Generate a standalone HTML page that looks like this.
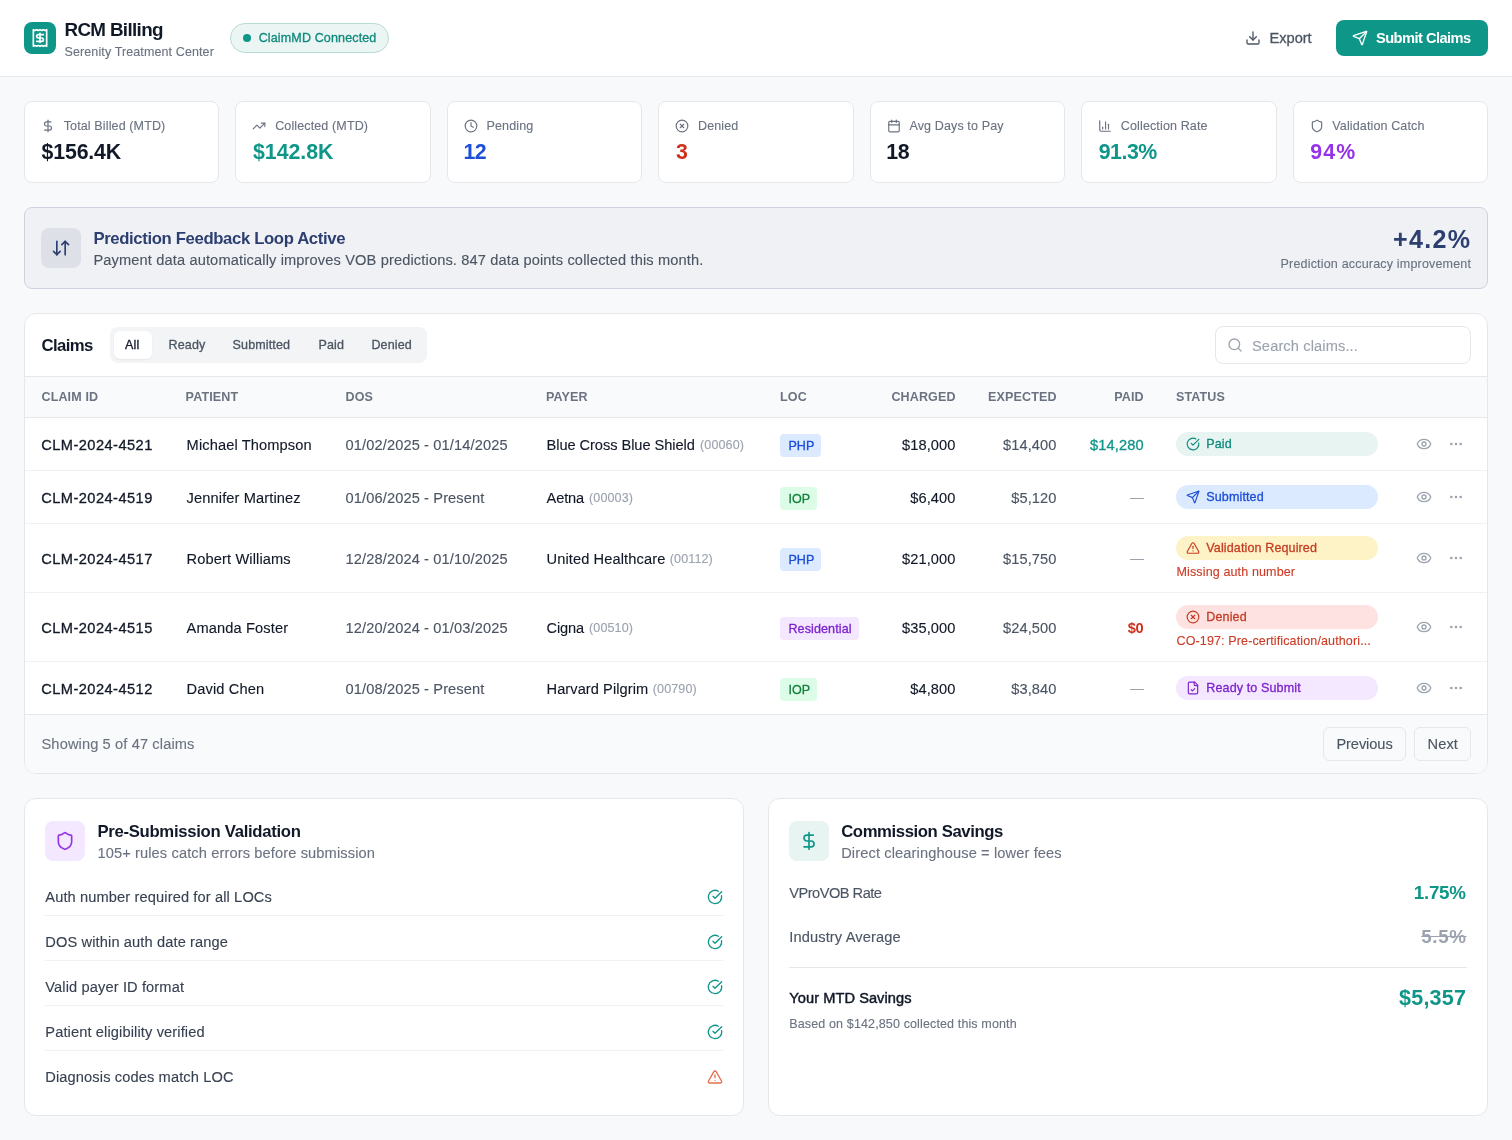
<!DOCTYPE html>
<html><head><meta charset="utf-8"><title>RCM Billing</title>
<style>
*{box-sizing:border-box;margin:0;padding:0}
html,body{width:1512px;height:1140px;overflow:hidden}
body{font-family:"Liberation Sans",sans-serif;background:#f8f9fb;position:relative}
.t{position:absolute;white-space:nowrap;line-height:1}
.b{position:absolute}
.i{position:absolute;overflow:visible}
#w{position:absolute;left:0;top:0;width:1512px;height:1140px;will-change:transform}
</style></head><body>
<div id="w">
<div class="b" style="left:0px;top:0px;width:1512px;height:76px;background:#fff;border-bottom:1px solid #e5e7eb;height:77px;"></div>
<div class="b" style="left:24px;top:22px;width:32px;height:32px;background:#0e9689;border-radius:8px;"></div>
<svg class="i" style="left:30px;top:28px;" width="20" height="20" viewBox="0 0 24 24" fill="none" stroke="#fff" stroke-width="2" stroke-linecap="round" stroke-linejoin="round"><path d="M4 2v20l2-1 2 1 2-1 2 1 2-1 2 1 2-1 2 1V2l-2 1-2-1-2 1-2-1-2 1-2-1-2 1Z"/><path d="M16 8h-6a2 2 0 1 0 0 4h4a2 2 0 1 1 0 4H8"/><path d="M12 17.5v-11"/></svg>
<div class="t" style="top:21.47px;font-size:18.81px;letter-spacing:-0.650px;color:#111827;font-weight:700;left:64.50px;">RCM Billing</div>
<div class="t" style="top:45.78px;font-size:12.54px;letter-spacing:0.100px;color:#6b7280;-webkit-text-stroke:0.12px #6b7280;left:64.50px;">Serenity Treatment Center</div>
<div class="b" style="left:230px;top:23px;width:159px;height:30px;background:#ebf5f3;border:1px solid #b7dcd5;border-radius:15px;"></div>
<div class="b" style="left:242.5px;top:34px;width:8px;height:8px;background:#0e9689;border-radius:50%;"></div>
<div class="t" style="top:31.58px;font-size:12.54px;letter-spacing:0.125px;color:#0f8a7d;-webkit-text-stroke:0.3px #0f8a7d;left:258.70px;">ClaimMD Connected</div>
<svg class="i" style="left:1245px;top:30px;" width="16" height="16" viewBox="0 0 24 24" fill="none" stroke="#4b5563" stroke-width="2" stroke-linecap="round" stroke-linejoin="round"><path d="M21 15v4a2 2 0 0 1-2 2H5a2 2 0 0 1-2-2v-4"/><polyline points="7 10 12 15 17 10"/><line x1="12" x2="12" y1="15" y2="3"/></svg>
<div class="t" style="top:31.21px;font-size:14.63px;letter-spacing:-0.040px;color:#4b5563;-webkit-text-stroke:0.3px #4b5563;left:1269.60px;">Export</div>
<div class="b" style="left:1336px;top:20px;width:152px;height:36px;background:#0e9689;border-radius:8px;"></div>
<svg class="i" style="left:1352px;top:30px;" width="16" height="16" viewBox="0 0 24 24" fill="none" stroke="#fff" stroke-width="2" stroke-linecap="round" stroke-linejoin="round"><path d="M14.536 21.686a.5.5 0 0 0 .937-.024l6.5-19a.496.496 0 0 0-.635-.635l-19 6.5a.5.5 0 0 0-.024.937l7.93 3.18a2 2 0 0 1 1.112 1.11z"/><path d="m21.854 2.147-10.94 10.939"/></svg>
<div class="t" style="top:31.21px;font-size:14.63px;letter-spacing:-0.533px;color:#fff;font-weight:700;left:1376.00px;">Submit Claims</div>
<div class="b" style="left:24.0px;top:101px;width:195.43px;height:82px;background:#fff;border:1px solid #e5e7eb;border-radius:8px;"></div>
<svg class="i" style="left:41.0px;top:118.5px;" width="14" height="14" viewBox="0 0 24 24" fill="none" stroke="#6b7280" stroke-width="2" stroke-linecap="round" stroke-linejoin="round"><line x1="12" x2="12" y1="2" y2="22"/><path d="M17 5H9.5a3.5 3.5 0 0 0 0 7h5a3.5 3.5 0 0 1 0 7H6"/></svg>
<div class="t" style="top:120.28px;font-size:12.54px;letter-spacing:0.120px;color:#6b7280;-webkit-text-stroke:0.12px #6b7280;left:63.70px;">Total Billed (MTD)</div>
<div class="t" style="top:141.75px;font-size:21.32px;letter-spacing:-0.167px;color:#111827;font-weight:700;left:41.60px;">$156.4K</div>
<div class="b" style="left:235.43px;top:101px;width:195.43px;height:82px;background:#fff;border:1px solid #e5e7eb;border-radius:8px;"></div>
<svg class="i" style="left:252.43px;top:118.5px;" width="14" height="14" viewBox="0 0 24 24" fill="none" stroke="#6b7280" stroke-width="2" stroke-linecap="round" stroke-linejoin="round"><polyline points="22 7 13.5 15.5 8.5 10.5 2 17"/><polyline points="16 7 22 7 22 13"/></svg>
<div class="t" style="top:120.28px;font-size:12.54px;letter-spacing:0.120px;color:#6b7280;-webkit-text-stroke:0.12px #6b7280;left:275.13px;">Collected (MTD)</div>
<div class="t" style="top:141.75px;font-size:21.32px;letter-spacing:-0.017px;color:#0e9689;font-weight:700;left:253.03px;">$142.8K</div>
<div class="b" style="left:446.86px;top:101px;width:195.43px;height:82px;background:#fff;border:1px solid #e5e7eb;border-radius:8px;"></div>
<svg class="i" style="left:463.86px;top:118.5px;" width="14" height="14" viewBox="0 0 24 24" fill="none" stroke="#6b7280" stroke-width="2" stroke-linecap="round" stroke-linejoin="round"><circle cx="12" cy="12" r="10"/><polyline points="12 6 12 12 16 14"/></svg>
<div class="t" style="top:120.28px;font-size:12.54px;letter-spacing:0.120px;color:#6b7280;-webkit-text-stroke:0.12px #6b7280;left:486.56px;">Pending</div>
<div class="t" style="top:141.75px;font-size:21.32px;letter-spacing:-0.500px;color:#1d4ed8;font-weight:700;left:463.46px;">12</div>
<div class="b" style="left:658.29px;top:101px;width:195.43px;height:82px;background:#fff;border:1px solid #e5e7eb;border-radius:8px;"></div>
<svg class="i" style="left:675.29px;top:118.5px;" width="14" height="14" viewBox="0 0 24 24" fill="none" stroke="#6b7280" stroke-width="2" stroke-linecap="round" stroke-linejoin="round"><circle cx="12" cy="12" r="10"/><path d="m15 9-6 6"/><path d="m9 9 6 6"/></svg>
<div class="t" style="top:120.28px;font-size:12.54px;letter-spacing:0.120px;color:#6b7280;-webkit-text-stroke:0.12px #6b7280;left:697.99px;">Denied</div>
<div class="t" style="top:141.75px;font-size:21.32px;letter-spacing:-0.500px;color:#cf301b;font-weight:700;left:675.89px;">3</div>
<div class="b" style="left:869.71px;top:101px;width:195.43px;height:82px;background:#fff;border:1px solid #e5e7eb;border-radius:8px;"></div>
<svg class="i" style="left:886.71px;top:118.5px;" width="14" height="14" viewBox="0 0 24 24" fill="none" stroke="#6b7280" stroke-width="2" stroke-linecap="round" stroke-linejoin="round"><path d="M8 2v4"/><path d="M16 2v4"/><rect width="18" height="18" x="3" y="4" rx="2"/><path d="M3 10h18"/></svg>
<div class="t" style="top:120.28px;font-size:12.54px;letter-spacing:0.120px;color:#6b7280;-webkit-text-stroke:0.12px #6b7280;left:909.41px;">Avg Days to Pay</div>
<div class="t" style="top:141.75px;font-size:21.32px;letter-spacing:-0.500px;color:#111827;font-weight:700;left:886.31px;">18</div>
<div class="b" style="left:1081.14px;top:101px;width:195.43px;height:82px;background:#fff;border:1px solid #e5e7eb;border-radius:8px;"></div>
<svg class="i" style="left:1098.14px;top:118.5px;" width="14" height="14" viewBox="0 0 24 24" fill="none" stroke="#6b7280" stroke-width="2" stroke-linecap="round" stroke-linejoin="round"><path d="M3 3v16a2 2 0 0 0 2 2h16"/><path d="M18 17V9"/><path d="M13 17V5"/><path d="M8 17v-3"/></svg>
<div class="t" style="top:120.28px;font-size:12.54px;letter-spacing:0.120px;color:#6b7280;-webkit-text-stroke:0.12px #6b7280;left:1120.84px;">Collection Rate</div>
<div class="t" style="top:141.75px;font-size:21.32px;letter-spacing:-0.475px;color:#0e9689;font-weight:700;left:1098.74px;">91.3%</div>
<div class="b" style="left:1292.57px;top:101px;width:195.43px;height:82px;background:#fff;border:1px solid #e5e7eb;border-radius:8px;"></div>
<svg class="i" style="left:1309.57px;top:118.5px;" width="14" height="14" viewBox="0 0 24 24" fill="none" stroke="#6b7280" stroke-width="2" stroke-linecap="round" stroke-linejoin="round"><path d="M20 13c0 5-3.5 7.5-7.66 8.95a1 1 0 0 1-.67-.01C7.5 20.5 4 18 4 13V6a1 1 0 0 1 1-1c2 0 4.5-1.2 6.24-2.72a1.17 1.17 0 0 1 1.52 0C14.51 3.81 17 5 19 5a1 1 0 0 1 1 1z"/></svg>
<div class="t" style="top:120.28px;font-size:12.54px;letter-spacing:0.120px;color:#6b7280;-webkit-text-stroke:0.12px #6b7280;left:1332.27px;">Validation Catch</div>
<div class="t" style="top:141.75px;font-size:21.32px;letter-spacing:1.200px;color:#9333ea;font-weight:700;left:1310.17px;">94%</div>
<div class="b" style="left:24px;top:207px;width:1464px;height:82px;background:#eff1f5;border:1px solid #cdd2dc;border-radius:8px;"></div>
<div class="b" style="left:41px;top:228px;width:40px;height:40px;background:#dde1e7;border-radius:8px;"></div>
<svg class="i" style="left:51px;top:238px;" width="20" height="20" viewBox="0 0 24 24" fill="none" stroke="#2d3f70" stroke-width="2" stroke-linecap="round" stroke-linejoin="round"><path d="m3 16 4 4 4-4"/><path d="M7 20V4"/><path d="m21 8-4-4-4 4"/><path d="M17 4v16"/></svg>
<div class="t" style="top:231.44px;font-size:16.72px;letter-spacing:-0.363px;color:#2d3f70;font-weight:700;left:93.40px;">Prediction Feedback Loop Active</div>
<div class="t" style="top:252.91px;font-size:14.63px;letter-spacing:0.131px;color:#4b5563;-webkit-text-stroke:0.12px #4b5563;left:93.40px;">Payment data automatically improves VOB predictions. 847 data points collected this month.</div>
<div class="t" style="top:227.36px;font-size:25.08px;letter-spacing:1.275px;color:#2d3f70;font-weight:700;right:40.76px;text-align:right;">+4.2%</div>
<div class="t" style="top:257.98px;font-size:12.54px;letter-spacing:0.173px;color:#6b7280;-webkit-text-stroke:0.12px #6b7280;right:40.83px;text-align:right;">Prediction accuracy improvement</div>
<div class="b" style="left:24px;top:313px;width:1464px;height:461px;background:#fff;border:1px solid #e5e7eb;border-radius:12px;overflow:hidden;"></div>
<div class="t" style="top:337.94px;font-size:16.72px;letter-spacing:-0.620px;color:#111827;font-weight:700;left:41.50px;">Claims</div>
<div class="b" style="left:110px;top:327px;width:317px;height:36px;background:#f3f4f6;border-radius:8px;"></div>
<div class="b" style="left:114px;top:331px;width:37.5px;height:28px;background:#fff;border-radius:6px;box-shadow:0 1px 2px rgba(0,0,0,.06);"></div>
<div class="t" style="top:339.28px;font-size:12.54px;letter-spacing:0.120px;color:#111827;-webkit-text-stroke:0.3px #111827;left:125.00px;">All</div>
<div class="t" style="top:339.28px;font-size:12.54px;letter-spacing:0.120px;color:#4b5563;-webkit-text-stroke:0.3px #4b5563;left:168.60px;">Ready</div>
<div class="t" style="top:339.28px;font-size:12.54px;letter-spacing:0.120px;color:#4b5563;-webkit-text-stroke:0.3px #4b5563;left:232.60px;">Submitted</div>
<div class="t" style="top:339.28px;font-size:12.54px;letter-spacing:0.120px;color:#4b5563;-webkit-text-stroke:0.3px #4b5563;left:318.50px;">Paid</div>
<div class="t" style="top:339.28px;font-size:12.54px;letter-spacing:0.120px;color:#4b5563;-webkit-text-stroke:0.3px #4b5563;left:371.40px;">Denied</div>
<div class="b" style="left:1215px;top:326px;width:256px;height:38px;background:#fff;border:1px solid #e5e7eb;border-radius:8px;"></div>
<svg class="i" style="left:1227px;top:337px;" width="16" height="16" viewBox="0 0 24 24" fill="none" stroke="#9ca3af" stroke-width="2" stroke-linecap="round" stroke-linejoin="round"><circle cx="11" cy="11" r="8"/><path d="m21 21-4.3-4.3"/></svg>
<div class="t" style="top:339.21px;font-size:14.63px;letter-spacing:0.120px;color:#9ca3af;-webkit-text-stroke:0.12px #9ca3af;left:1252.00px;">Search claims...</div>
<div class="b" style="left:25px;top:376px;width:1462px;height:1px;background:#e5e7eb;"></div>
<div class="b" style="left:25px;top:377px;width:1462px;height:40px;background:#f9fafb;"></div>
<div class="b" style="left:25px;top:417px;width:1462px;height:1px;background:#e5e7eb;"></div>
<div class="t" style="top:391.18px;font-size:12.54px;letter-spacing:0.120px;color:#6b7280;font-weight:700;left:41.50px;">CLAIM ID</div>
<div class="t" style="top:391.18px;font-size:12.54px;letter-spacing:0.120px;color:#6b7280;font-weight:700;left:185.60px;">PATIENT</div>
<div class="t" style="top:391.18px;font-size:12.54px;letter-spacing:0.120px;color:#6b7280;font-weight:700;left:345.50px;">DOS</div>
<div class="t" style="top:391.18px;font-size:12.54px;letter-spacing:0.120px;color:#6b7280;font-weight:700;left:546.00px;">PAYER</div>
<div class="t" style="top:391.18px;font-size:12.54px;letter-spacing:0.120px;color:#6b7280;font-weight:700;left:780.00px;">LOC</div>
<div class="t" style="top:391.18px;font-size:12.54px;letter-spacing:0.120px;color:#6b7280;font-weight:700;right:556.39px;text-align:right;">CHARGED</div>
<div class="t" style="top:391.18px;font-size:12.54px;letter-spacing:0.120px;color:#6b7280;font-weight:700;right:455.40px;text-align:right;">EXPECTED</div>
<div class="t" style="top:391.18px;font-size:12.54px;letter-spacing:0.120px;color:#6b7280;font-weight:700;right:368.24px;text-align:right;">PAID</div>
<div class="t" style="top:391.18px;font-size:12.54px;letter-spacing:0.120px;color:#6b7280;font-weight:700;left:1176.00px;">STATUS</div>
<div class="t" style="top:437.51px;font-size:14.63px;letter-spacing:0.450px;color:#111827;-webkit-text-stroke:0.3px #111827;left:41.20px;">CLM-2024-4521</div>
<div class="t" style="top:437.51px;font-size:14.63px;letter-spacing:0.120px;color:#111827;-webkit-text-stroke:0.12px #111827;left:186.60px;">Michael Thompson</div>
<div class="t" style="top:437.51px;font-size:14.63px;letter-spacing:0.120px;color:#4b5563;-webkit-text-stroke:0.12px #4b5563;left:345.50px;">01/02/2025 - 01/14/2025</div>
<div class="t" style="top:437.51px;font-size:14.63px;letter-spacing:-0.057px;color:#111827;-webkit-text-stroke:0.12px #111827;left:546.50px;">Blue Cross Blue Shield</div>
<div class="t" style="top:439.28px;font-size:12.54px;letter-spacing:0.120px;color:#9ca3af;-webkit-text-stroke:0.12px #9ca3af;left:700.00px;">(00060)</div>
<div class="b" style="left:780px;top:433.5px;width:40.5px;height:23px;background:#dbeafe;border-radius:4px;"></div>
<div class="t" style="top:439.88px;font-size:12.54px;letter-spacing:0.120px;color:#1d4ed8;-webkit-text-stroke:0.3px #1d4ed8;left:788.40px;">PHP</div>
<div class="t" style="top:437.51px;font-size:14.63px;letter-spacing:0.120px;color:#111827;-webkit-text-stroke:0.12px #111827;right:556.40px;text-align:right;">$18,000</div>
<div class="t" style="top:437.51px;font-size:14.63px;letter-spacing:0.120px;color:#4b5563;-webkit-text-stroke:0.12px #4b5563;right:455.40px;text-align:right;">$14,400</div>
<div class="t" style="top:437.51px;font-size:14.63px;letter-spacing:0.120px;color:#0e9689;-webkit-text-stroke:0.3px #0e9689;right:368.30px;text-align:right;">$14,280</div>
<div class="b" style="left:1176px;top:432.0px;width:202px;height:24px;background:#e7f4f1;border-radius:12px;"></div>
<svg class="i" style="left:1186px;top:437.0px;" width="14" height="14" viewBox="0 0 24 24" fill="none" stroke="#0f8a7d" stroke-width="2" stroke-linecap="round" stroke-linejoin="round"><path d="M21.801 10A10 10 0 1 1 17 3.335"/><path d="m9 11 3 3L22 4"/></svg>
<div class="t" style="top:438.28px;font-size:12.54px;letter-spacing:0.120px;color:#0f8a7d;-webkit-text-stroke:0.3px #0f8a7d;left:1206.30px;">Paid</div>
<svg class="i" style="left:1416px;top:436.0px;" width="16" height="16" viewBox="0 0 24 24" fill="none" stroke="#9ca3af" stroke-width="2" stroke-linecap="round" stroke-linejoin="round"><path d="M2.062 12.348a1 1 0 0 1 0-.696 10.75 10.75 0 0 1 19.876 0 1 1 0 0 1 0 .696 10.75 10.75 0 0 1-19.876 0"/><circle cx="12" cy="12" r="3"/></svg>
<svg class="i" style="left:1448px;top:436.0px;" width="16" height="16" viewBox="0 0 24 24" fill="none" stroke="#9ca3af" stroke-width="2" stroke-linecap="round" stroke-linejoin="round"><circle cx="12" cy="12" r="1"/><circle cx="19" cy="12" r="1"/><circle cx="5" cy="12" r="1"/></svg>
<div class="b" style="left:25px;top:470px;width:1462px;height:1px;background:#f0f1f3;"></div>
<div class="t" style="top:490.51px;font-size:14.63px;letter-spacing:0.450px;color:#111827;-webkit-text-stroke:0.3px #111827;left:41.20px;">CLM-2024-4519</div>
<div class="t" style="top:490.51px;font-size:14.63px;letter-spacing:0.120px;color:#111827;-webkit-text-stroke:0.12px #111827;left:186.60px;">Jennifer Martinez</div>
<div class="t" style="top:490.51px;font-size:14.63px;letter-spacing:0.120px;color:#4b5563;-webkit-text-stroke:0.12px #4b5563;left:345.50px;">01/06/2025 - Present</div>
<div class="t" style="top:490.51px;font-size:14.63px;letter-spacing:-0.125px;color:#111827;-webkit-text-stroke:0.12px #111827;left:546.50px;">Aetna</div>
<div class="t" style="top:492.28px;font-size:12.54px;letter-spacing:0.120px;color:#9ca3af;-webkit-text-stroke:0.12px #9ca3af;left:589.00px;">(00003)</div>
<div class="b" style="left:780px;top:486.5px;width:37px;height:23px;background:#dcfce7;border-radius:4px;"></div>
<div class="t" style="top:492.88px;font-size:12.54px;letter-spacing:0.120px;color:#15803d;-webkit-text-stroke:0.3px #15803d;left:788.40px;">IOP</div>
<div class="t" style="top:490.51px;font-size:14.63px;letter-spacing:0.120px;color:#111827;-webkit-text-stroke:0.12px #111827;right:556.42px;text-align:right;">$6,400</div>
<div class="t" style="top:490.51px;font-size:14.63px;letter-spacing:0.120px;color:#4b5563;-webkit-text-stroke:0.12px #4b5563;right:455.42px;text-align:right;">$5,120</div>
<div class="b" style="left:1129.5px;top:498px;width:14px;height:1.2px;background:#9ca3af;"></div>
<div class="b" style="left:1176px;top:485.0px;width:202px;height:24px;background:#dbeafe;border-radius:12px;"></div>
<svg class="i" style="left:1186px;top:490.0px;" width="14" height="14" viewBox="0 0 24 24" fill="none" stroke="#1d4ed8" stroke-width="2" stroke-linecap="round" stroke-linejoin="round"><path d="M14.536 21.686a.5.5 0 0 0 .937-.024l6.5-19a.496.496 0 0 0-.635-.635l-19 6.5a.5.5 0 0 0-.024.937l7.93 3.18a2 2 0 0 1 1.112 1.11z"/><path d="m21.854 2.147-10.94 10.939"/></svg>
<div class="t" style="top:491.28px;font-size:12.54px;letter-spacing:0.120px;color:#1d4ed8;-webkit-text-stroke:0.3px #1d4ed8;left:1206.30px;">Submitted</div>
<svg class="i" style="left:1416px;top:489.0px;" width="16" height="16" viewBox="0 0 24 24" fill="none" stroke="#9ca3af" stroke-width="2" stroke-linecap="round" stroke-linejoin="round"><path d="M2.062 12.348a1 1 0 0 1 0-.696 10.75 10.75 0 0 1 19.876 0 1 1 0 0 1 0 .696 10.75 10.75 0 0 1-19.876 0"/><circle cx="12" cy="12" r="3"/></svg>
<svg class="i" style="left:1448px;top:489.0px;" width="16" height="16" viewBox="0 0 24 24" fill="none" stroke="#9ca3af" stroke-width="2" stroke-linecap="round" stroke-linejoin="round"><circle cx="12" cy="12" r="1"/><circle cx="19" cy="12" r="1"/><circle cx="5" cy="12" r="1"/></svg>
<div class="b" style="left:25px;top:523px;width:1462px;height:1px;background:#f0f1f3;"></div>
<div class="t" style="top:551.51px;font-size:14.63px;letter-spacing:0.450px;color:#111827;-webkit-text-stroke:0.3px #111827;left:41.20px;">CLM-2024-4517</div>
<div class="t" style="top:551.51px;font-size:14.63px;letter-spacing:0.120px;color:#111827;-webkit-text-stroke:0.12px #111827;left:186.60px;">Robert Williams</div>
<div class="t" style="top:551.51px;font-size:14.63px;letter-spacing:0.120px;color:#4b5563;-webkit-text-stroke:0.12px #4b5563;left:345.50px;">12/28/2024 - 01/10/2025</div>
<div class="t" style="top:551.51px;font-size:14.63px;letter-spacing:0.106px;color:#111827;-webkit-text-stroke:0.12px #111827;left:546.50px;">United Healthcare</div>
<div class="t" style="top:553.28px;font-size:12.54px;letter-spacing:0.120px;color:#9ca3af;-webkit-text-stroke:0.12px #9ca3af;left:669.80px;">(00112)</div>
<div class="b" style="left:780px;top:547.5px;width:40.5px;height:23px;background:#dbeafe;border-radius:4px;"></div>
<div class="t" style="top:553.88px;font-size:12.54px;letter-spacing:0.120px;color:#1d4ed8;-webkit-text-stroke:0.3px #1d4ed8;left:788.40px;">PHP</div>
<div class="t" style="top:551.51px;font-size:14.63px;letter-spacing:0.120px;color:#111827;-webkit-text-stroke:0.12px #111827;right:556.40px;text-align:right;">$21,000</div>
<div class="t" style="top:551.51px;font-size:14.63px;letter-spacing:0.120px;color:#4b5563;-webkit-text-stroke:0.12px #4b5563;right:455.40px;text-align:right;">$15,750</div>
<div class="b" style="left:1129.5px;top:559px;width:14px;height:1.2px;background:#9ca3af;"></div>
<div class="b" style="left:1176px;top:535.5px;width:202px;height:24px;background:#fef3c7;border-radius:12px;"></div>
<svg class="i" style="left:1186px;top:540.5px;" width="14" height="14" viewBox="0 0 24 24" fill="none" stroke="#c53c22" stroke-width="2" stroke-linecap="round" stroke-linejoin="round"><path d="m21.73 18-8-14a2 2 0 0 0-3.48 0l-8 14A2 2 0 0 0 4 21h16a2 2 0 0 0 1.73-3"/><path d="M12 9v4"/><path d="M12 17h.01"/></svg>
<div class="t" style="top:541.78px;font-size:12.54px;letter-spacing:0.120px;color:#c53c22;-webkit-text-stroke:0.3px #c53c22;left:1206.30px;">Validation Required</div>
<div class="t" style="top:566.08px;font-size:12.54px;letter-spacing:0.120px;color:#cc3b25;-webkit-text-stroke:0.12px #cc3b25;left:1176.50px;">Missing auth number</div>
<svg class="i" style="left:1416px;top:550.0px;" width="16" height="16" viewBox="0 0 24 24" fill="none" stroke="#9ca3af" stroke-width="2" stroke-linecap="round" stroke-linejoin="round"><path d="M2.062 12.348a1 1 0 0 1 0-.696 10.75 10.75 0 0 1 19.876 0 1 1 0 0 1 0 .696 10.75 10.75 0 0 1-19.876 0"/><circle cx="12" cy="12" r="3"/></svg>
<svg class="i" style="left:1448px;top:550.0px;" width="16" height="16" viewBox="0 0 24 24" fill="none" stroke="#9ca3af" stroke-width="2" stroke-linecap="round" stroke-linejoin="round"><circle cx="12" cy="12" r="1"/><circle cx="19" cy="12" r="1"/><circle cx="5" cy="12" r="1"/></svg>
<div class="b" style="left:25px;top:592px;width:1462px;height:1px;background:#f0f1f3;"></div>
<div class="t" style="top:620.51px;font-size:14.63px;letter-spacing:0.450px;color:#111827;-webkit-text-stroke:0.3px #111827;left:41.20px;">CLM-2024-4515</div>
<div class="t" style="top:620.51px;font-size:14.63px;letter-spacing:0.120px;color:#111827;-webkit-text-stroke:0.12px #111827;left:186.60px;">Amanda Foster</div>
<div class="t" style="top:620.51px;font-size:14.63px;letter-spacing:0.120px;color:#4b5563;-webkit-text-stroke:0.12px #4b5563;left:345.50px;">12/20/2024 - 01/03/2025</div>
<div class="t" style="top:620.51px;font-size:14.63px;letter-spacing:-0.125px;color:#111827;-webkit-text-stroke:0.12px #111827;left:546.50px;">Cigna</div>
<div class="t" style="top:622.28px;font-size:12.54px;letter-spacing:0.120px;color:#9ca3af;-webkit-text-stroke:0.12px #9ca3af;left:589.00px;">(00510)</div>
<div class="b" style="left:780px;top:616.5px;width:79px;height:23px;background:#f3e8ff;border-radius:4px;"></div>
<div class="t" style="top:622.88px;font-size:12.54px;letter-spacing:0.120px;color:#7e22ce;-webkit-text-stroke:0.3px #7e22ce;left:788.40px;">Residential</div>
<div class="t" style="top:620.51px;font-size:14.63px;letter-spacing:0.120px;color:#111827;-webkit-text-stroke:0.12px #111827;right:556.40px;text-align:right;">$35,000</div>
<div class="t" style="top:620.51px;font-size:14.63px;letter-spacing:0.120px;color:#4b5563;-webkit-text-stroke:0.12px #4b5563;right:455.40px;text-align:right;">$24,500</div>
<div class="t" style="top:620.51px;font-size:14.63px;letter-spacing:-0.350px;color:#cf301b;font-weight:700;right:368.71px;text-align:right;">$0</div>
<div class="b" style="left:1176px;top:604.5px;width:202px;height:24px;background:#fee2e2;border-radius:12px;"></div>
<svg class="i" style="left:1186px;top:609.5px;" width="14" height="14" viewBox="0 0 24 24" fill="none" stroke="#c53c22" stroke-width="2" stroke-linecap="round" stroke-linejoin="round"><circle cx="12" cy="12" r="10"/><path d="m15 9-6 6"/><path d="m9 9 6 6"/></svg>
<div class="t" style="top:610.78px;font-size:12.54px;letter-spacing:0.120px;color:#c53c22;-webkit-text-stroke:0.3px #c53c22;left:1206.30px;">Denied</div>
<div class="t" style="top:635.08px;font-size:12.54px;letter-spacing:0.120px;color:#cc3b25;-webkit-text-stroke:0.12px #cc3b25;left:1176.50px;">CO-197: Pre-certification/authori...</div>
<svg class="i" style="left:1416px;top:619.0px;" width="16" height="16" viewBox="0 0 24 24" fill="none" stroke="#9ca3af" stroke-width="2" stroke-linecap="round" stroke-linejoin="round"><path d="M2.062 12.348a1 1 0 0 1 0-.696 10.75 10.75 0 0 1 19.876 0 1 1 0 0 1 0 .696 10.75 10.75 0 0 1-19.876 0"/><circle cx="12" cy="12" r="3"/></svg>
<svg class="i" style="left:1448px;top:619.0px;" width="16" height="16" viewBox="0 0 24 24" fill="none" stroke="#9ca3af" stroke-width="2" stroke-linecap="round" stroke-linejoin="round"><circle cx="12" cy="12" r="1"/><circle cx="19" cy="12" r="1"/><circle cx="5" cy="12" r="1"/></svg>
<div class="b" style="left:25px;top:661px;width:1462px;height:1px;background:#f0f1f3;"></div>
<div class="t" style="top:681.51px;font-size:14.63px;letter-spacing:0.450px;color:#111827;-webkit-text-stroke:0.3px #111827;left:41.20px;">CLM-2024-4512</div>
<div class="t" style="top:681.51px;font-size:14.63px;letter-spacing:0.120px;color:#111827;-webkit-text-stroke:0.12px #111827;left:186.60px;">David Chen</div>
<div class="t" style="top:681.51px;font-size:14.63px;letter-spacing:0.120px;color:#4b5563;-webkit-text-stroke:0.12px #4b5563;left:345.50px;">01/08/2025 - Present</div>
<div class="t" style="top:681.51px;font-size:14.63px;letter-spacing:0.064px;color:#111827;-webkit-text-stroke:0.12px #111827;left:546.50px;">Harvard Pilgrim</div>
<div class="t" style="top:683.28px;font-size:12.54px;letter-spacing:0.120px;color:#9ca3af;-webkit-text-stroke:0.12px #9ca3af;left:652.80px;">(00790)</div>
<div class="b" style="left:780px;top:677.5px;width:37px;height:23px;background:#dcfce7;border-radius:4px;"></div>
<div class="t" style="top:683.88px;font-size:12.54px;letter-spacing:0.120px;color:#15803d;-webkit-text-stroke:0.3px #15803d;left:788.40px;">IOP</div>
<div class="t" style="top:681.51px;font-size:14.63px;letter-spacing:0.120px;color:#111827;-webkit-text-stroke:0.12px #111827;right:556.42px;text-align:right;">$4,800</div>
<div class="t" style="top:681.51px;font-size:14.63px;letter-spacing:0.120px;color:#4b5563;-webkit-text-stroke:0.12px #4b5563;right:455.42px;text-align:right;">$3,840</div>
<div class="b" style="left:1129.5px;top:689px;width:14px;height:1.2px;background:#9ca3af;"></div>
<div class="b" style="left:1176px;top:676.0px;width:202px;height:24px;background:#f3e8ff;border-radius:12px;"></div>
<svg class="i" style="left:1186px;top:681.0px;" width="14" height="14" viewBox="0 0 24 24" fill="none" stroke="#7e22ce" stroke-width="2" stroke-linecap="round" stroke-linejoin="round"><path d="M15 2H6a2 2 0 0 0-2 2v16a2 2 0 0 0 2 2h12a2 2 0 0 0 2-2V7Z"/><path d="M14 2v4a2 2 0 0 0 2 2h4"/><path d="m9 15 2 2 4-4"/></svg>
<div class="t" style="top:682.28px;font-size:12.54px;letter-spacing:0.120px;color:#7e22ce;-webkit-text-stroke:0.3px #7e22ce;left:1206.30px;">Ready to Submit</div>
<svg class="i" style="left:1416px;top:680.0px;" width="16" height="16" viewBox="0 0 24 24" fill="none" stroke="#9ca3af" stroke-width="2" stroke-linecap="round" stroke-linejoin="round"><path d="M2.062 12.348a1 1 0 0 1 0-.696 10.75 10.75 0 0 1 19.876 0 1 1 0 0 1 0 .696 10.75 10.75 0 0 1-19.876 0"/><circle cx="12" cy="12" r="3"/></svg>
<svg class="i" style="left:1448px;top:680.0px;" width="16" height="16" viewBox="0 0 24 24" fill="none" stroke="#9ca3af" stroke-width="2" stroke-linecap="round" stroke-linejoin="round"><circle cx="12" cy="12" r="1"/><circle cx="19" cy="12" r="1"/><circle cx="5" cy="12" r="1"/></svg>
<div class="b" style="left:25px;top:714px;width:1462px;height:1px;background:#e5e7eb;"></div>
<div class="b" style="left:25px;top:715px;width:1462px;height:58px;background:#f9fafb;border-radius:0 0 11px 11px;"></div>
<div class="t" style="top:737.21px;font-size:14.63px;letter-spacing:0.120px;color:#6b7280;-webkit-text-stroke:0.12px #6b7280;left:41.50px;">Showing 5 of 47 claims</div>
<div class="b" style="left:1323px;top:727px;width:83px;height:34px;border:1px solid #e5e7eb;border-radius:6px;"></div>
<div class="b" style="left:1414px;top:727px;width:57px;height:34px;border:1px solid #e5e7eb;border-radius:6px;"></div>
<div class="t" style="top:737.11px;font-size:14.63px;letter-spacing:-0.086px;color:#4b5563;-webkit-text-stroke:0.12px #4b5563;left:1336.40px;">Previous</div>
<div class="t" style="top:737.11px;font-size:14.63px;letter-spacing:0.067px;color:#4b5563;-webkit-text-stroke:0.12px #4b5563;left:1427.60px;">Next</div>
<div class="b" style="left:24px;top:798px;width:720px;height:318px;background:#fff;border:1px solid #e5e7eb;border-radius:12px;"></div>
<div class="b" style="left:768px;top:798px;width:720px;height:318px;background:#fff;border:1px solid #e5e7eb;border-radius:12px;"></div>
<div class="b" style="left:45px;top:821px;width:40px;height:40px;background:#f3e8ff;border-radius:8px;"></div>
<svg class="i" style="left:55px;top:831px;" width="20" height="20" viewBox="0 0 24 24" fill="none" stroke="#9333ea" stroke-width="2" stroke-linecap="round" stroke-linejoin="round"><path d="M20 13c0 5-3.5 7.5-7.66 8.95a1 1 0 0 1-.67-.01C7.5 20.5 4 18 4 13V6a1 1 0 0 1 1-1c2 0 4.5-1.2 6.24-2.72a1.17 1.17 0 0 1 1.52 0C14.51 3.81 17 5 19 5a1 1 0 0 1 1 1z"/></svg>
<div class="t" style="top:823.64px;font-size:16.72px;letter-spacing:-0.296px;color:#111827;font-weight:700;left:97.40px;">Pre-Submission Validation</div>
<div class="t" style="top:846.01px;font-size:14.63px;letter-spacing:0.120px;color:#6b7280;-webkit-text-stroke:0.12px #6b7280;left:97.40px;">105+ rules catch errors before submission</div>
<div class="t" style="top:890.01px;font-size:14.63px;letter-spacing:0.120px;color:#374151;-webkit-text-stroke:0.12px #374151;left:45.30px;">Auth number required for all LOCs</div>
<div class="b" style="left:45px;top:915px;width:678px;height:1px;background:#f0f1f3;"></div>
<svg class="i" style="left:707px;top:889px;" width="16" height="16" viewBox="0 0 24 24" fill="none" stroke="#0e9689" stroke-width="2" stroke-linecap="round" stroke-linejoin="round"><path d="M21.801 10A10 10 0 1 1 17 3.335"/><path d="m9 11 3 3L22 4"/></svg>
<div class="t" style="top:935.01px;font-size:14.63px;letter-spacing:0.120px;color:#374151;-webkit-text-stroke:0.12px #374151;left:45.30px;">DOS within auth date range</div>
<div class="b" style="left:45px;top:960px;width:678px;height:1px;background:#f0f1f3;"></div>
<svg class="i" style="left:707px;top:934px;" width="16" height="16" viewBox="0 0 24 24" fill="none" stroke="#0e9689" stroke-width="2" stroke-linecap="round" stroke-linejoin="round"><path d="M21.801 10A10 10 0 1 1 17 3.335"/><path d="m9 11 3 3L22 4"/></svg>
<div class="t" style="top:980.01px;font-size:14.63px;letter-spacing:0.120px;color:#374151;-webkit-text-stroke:0.12px #374151;left:45.30px;">Valid payer ID format</div>
<div class="b" style="left:45px;top:1005px;width:678px;height:1px;background:#f0f1f3;"></div>
<svg class="i" style="left:707px;top:979px;" width="16" height="16" viewBox="0 0 24 24" fill="none" stroke="#0e9689" stroke-width="2" stroke-linecap="round" stroke-linejoin="round"><path d="M21.801 10A10 10 0 1 1 17 3.335"/><path d="m9 11 3 3L22 4"/></svg>
<div class="t" style="top:1025.01px;font-size:14.63px;letter-spacing:0.120px;color:#374151;-webkit-text-stroke:0.12px #374151;left:45.30px;">Patient eligibility verified</div>
<div class="b" style="left:45px;top:1050px;width:678px;height:1px;background:#f0f1f3;"></div>
<svg class="i" style="left:707px;top:1024px;" width="16" height="16" viewBox="0 0 24 24" fill="none" stroke="#0e9689" stroke-width="2" stroke-linecap="round" stroke-linejoin="round"><path d="M21.801 10A10 10 0 1 1 17 3.335"/><path d="m9 11 3 3L22 4"/></svg>
<div class="t" style="top:1070.01px;font-size:14.63px;letter-spacing:0.120px;color:#374151;-webkit-text-stroke:0.12px #374151;left:45.30px;">Diagnosis codes match LOC</div>
<svg class="i" style="left:707px;top:1069px;" width="16" height="16" viewBox="0 0 24 24" fill="none" stroke="#e2704c" stroke-width="2" stroke-linecap="round" stroke-linejoin="round"><path d="m21.73 18-8-14a2 2 0 0 0-3.48 0l-8 14A2 2 0 0 0 4 21h16a2 2 0 0 0 1.73-3"/><path d="M12 9v4"/><path d="M12 17h.01"/></svg>
<div class="b" style="left:789px;top:821px;width:40px;height:40px;background:#e7f4f1;border-radius:8px;"></div>
<svg class="i" style="left:799px;top:831px;" width="20" height="20" viewBox="0 0 24 24" fill="none" stroke="#0e9689" stroke-width="2" stroke-linecap="round" stroke-linejoin="round"><line x1="12" x2="12" y1="2" y2="22"/><path d="M17 5H9.5a3.5 3.5 0 0 0 0 7h5a3.5 3.5 0 0 1 0 7H6"/></svg>
<div class="t" style="top:823.64px;font-size:16.72px;letter-spacing:-0.400px;color:#111827;font-weight:700;left:841.20px;">Commission Savings</div>
<div class="t" style="top:846.01px;font-size:14.63px;letter-spacing:0.120px;color:#6b7280;-webkit-text-stroke:0.12px #6b7280;left:841.20px;">Direct clearinghouse = lower fees</div>
<div class="t" style="top:886.21px;font-size:14.63px;letter-spacing:-0.518px;color:#4b5563;-webkit-text-stroke:0.12px #4b5563;left:789.30px;">VProVOB Rate</div>
<div class="t" style="top:883.97px;font-size:18.81px;letter-spacing:-0.250px;color:#0e9689;font-weight:700;right:46.24px;text-align:right;">1.75%</div>
<div class="t" style="top:930.01px;font-size:14.63px;letter-spacing:0.120px;color:#4b5563;-webkit-text-stroke:0.12px #4b5563;left:789.30px;">Industry Average</div>
<div class="t" style="top:928.07px;font-size:18.81px;letter-spacing:0.600px;color:#9ca3af;font-weight:700;right:45.45px;text-align:right;text-decoration:line-through;">5.5%</div>
<div class="b" style="left:789px;top:967px;width:678px;height:1px;background:#e5e7eb;"></div>
<div class="t" style="top:991.41px;font-size:14.63px;letter-spacing:0.053px;color:#111827;-webkit-text-stroke:0.45px #111827;left:789.30px;">Your MTD Savings</div>
<div class="t" style="top:987.67px;font-size:21.53px;letter-spacing:0.220px;color:#0e9689;font-weight:700;right:45.82px;text-align:right;">$5,357</div>
<div class="t" style="top:1017.98px;font-size:12.54px;letter-spacing:0.120px;color:#6b7280;-webkit-text-stroke:0.12px #6b7280;left:789.30px;">Based on $142,850 collected this month</div>
</div>
</body></html>
